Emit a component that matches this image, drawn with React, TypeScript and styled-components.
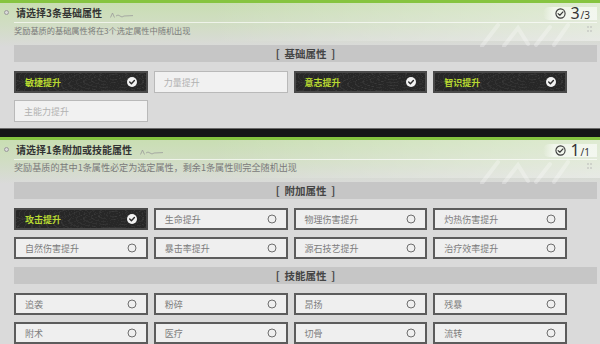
import styled, { createGlobalStyle } from 'styled-components'

const GlobalStyle = createGlobalStyle`
  html, body {
    margin: 0;
    padding: 0;
    background: #dadada;
  }
  body {
    width: 600px;
    height: 344px;
    overflow: hidden;
    font-family: "Noto Sans CJK SC", "Noto Sans", sans-serif;
  }
`

type ItemState = 'selected' | 'open' | 'disabled'

interface Attr {
  name: string
  state: ItemState
}

const Page = styled.div`
  display: flex;
  flex-direction: column;
  width: 600px;
  height: 344px;
  overflow: hidden;
`

const Panel = styled.section<{ $last?: boolean }>`
  position: relative;
  display: flex;
  flex-direction: column;
  border-top: 3px solid #86c440;
  padding: 0 3px ${(p) => (p.$last ? '0' : '6px')} 14px;
  background:
    linear-gradient(90deg, rgba(255, 255, 255, 0) 35%, rgba(255, 255, 255, 0.4) 100%) top left / 100% 38px no-repeat,
    linear-gradient(180deg, #c9deb3 0, #d1ddc4 22px, #dadada 44px, #dadada 100%);
`

const Separator = styled.div`
  height: 10px;
  background: #161616;
  border-top: 1px solid #6a6a6a;
`

const TitleRow = styled.div`
  position: relative;
  display: flex;
  align-items: center;
  height: 19px;
  border-bottom: 1px solid rgba(255, 255, 255, 0.65);
`

const Bullet = styled.span`
  width: 3px;
  height: 3px;
  margin-left: -10px;
  margin-right: 7px;
  border: 1px solid #9a9a9a;
  border-radius: 50%;
  background: #d8d8d8;
`

const Title = styled.h2`
  margin: 0;
  font-size: 10px;
  font-weight: 700;
  color: #333;
`

const Mark = styled.svg`
  margin-left: 8px;
  margin-top: 4px;
`

const Counter = styled.div`
  margin-left: auto;
  margin-top: 2px;
  display: flex;
  align-items: baseline;
  gap: 1px;
  height: 13px;
  padding: 0 7px 0 12px;
  background: linear-gradient(90deg, rgba(255, 255, 255, 0) 0, rgba(255, 255, 255, 0.6) 20%);
  border-radius: 6px 0 0 6px;
  color: #333;
  font-family: "Noto Sans", Roboto, sans-serif;
`

const CounterIcon = styled.svg`
  align-self: center;
  margin-right: 3px;
`

const Big = styled.span`
  font-size: 16px;
  line-height: 13px;
`

const Small = styled.span`
  font-size: 10px;
  line-height: 10px;
`

const Subtitle = styled.p<{ $size: number }>`
  margin: 0;
  height: 12px;
  line-height: 12px;
  margin-top: 1px;
  font-size: ${(p) => p.$size}px;
  color: #7a7a7a;
`

const Watermark = styled.svg`
  position: absolute;
  right: 6px;
  top: 14px;
  pointer-events: none;
`

const Category = styled.div<{ $gap: number }>`
  display: flex;
  align-items: center;
  justify-content: center;
  height: 17px;
  margin-top: ${(p) => p.$gap}px;
  background: #c6c6c6;
  font-size: 10.5px;
  font-weight: 700;
  color: #454545;
  white-space: pre;
`

const Grid = styled.div`
  display: grid;
  grid-template-columns: repeat(4, 1fr);
  column-gap: 6px;
  row-gap: 7px;
  margin: 9px 30px 0 0;
`

const Item = styled.div<{ $state: ItemState }>`
  box-sizing: border-box;
  display: flex;
  align-items: center;
  justify-content: space-between;
  height: 22px;
  padding: 0 9px 0 9px;
  font-size: 9px;
  ${(p) =>
    p.$state === 'selected'
      ? `
    border: 2px solid #4a4a4a;
    background-color: #272727;
    background-image:
      repeating-radial-gradient(ellipse at 75% 20%, transparent 0 4px, rgba(255,255,255,0.05) 4px 5px),
      repeating-radial-gradient(ellipse at 10% 120%, transparent 0 5px, rgba(255,255,255,0.04) 5px 6px);
    color: #b8d931;
    font-weight: 700;
  `
      : p.$state === 'open'
        ? `
    border: 2px solid #5c5c5c;
    background: #efefef;
    color: #7c7c7c;
  `
        : `
    border: 1.5px solid #b9b9b9;
    background: #f1f1f1;
    color: #b2b2b2;
  `}
`

const Check = () => (
  <svg width='10' height='10' viewBox='0 0 10 10'>
    <circle cx='5' cy='5' r='5' fill='#f2f2f2' />
    <path d='M2.7 5.1 L4.4 6.7 L7.4 3.6' fill='none' stroke='#2a2a2a' strokeWidth='1.4' strokeLinecap='round' strokeLinejoin='round' />
  </svg>
)

const Ring = () => (
  <svg width='10' height='10' viewBox='0 0 10 10'>
    <circle cx='5' cy='5' r='4' fill='none' stroke='#6e6e6e' strokeWidth='1' />
  </svg>
)

const Attribute = ({ name, state }: Attr) => (
  <Item $state={state}>
    <span>{name}</span>
    {state === 'selected' && <Check />}
    {state === 'open' && <Ring />}
  </Item>
)

interface HeaderProps {
  title: string
  sub: string
  subSize: number
  done: number
  total: number
}

const Header = ({ title, sub, subSize, done, total }: HeaderProps) => (
  <>
    <TitleRow>
      <Bullet />
      <Title>{title}</Title>
      <Mark width='24' height='6' viewBox='0 0 24 6'>
        <path d='M0.5 5.5 L2.5 1 L4.5 5.5 M6 4 Q8 2 10 4 T14 4 L23 3.6' fill='none' stroke='#9a9a9a' strokeWidth='0.8' />
      </Mark>
      <Counter>
        <CounterIcon width='11' height='11' viewBox='0 0 12 12'>
          <circle cx='6' cy='6' r='5' fill='none' stroke='#3a3a3a' strokeWidth='1.2' />
          <path d='M3.4 6.1 L5.3 7.9 L8.7 4.3' fill='none' stroke='#3a3a3a' strokeWidth='1.3' strokeLinecap='round' strokeLinejoin='round' />
        </CounterIcon>
        <Big>{done}</Big>
        <Small>/{total}</Small>
      </Counter>
    </TitleRow>
    <Subtitle $size={subSize}>{sub}</Subtitle>
    <Watermark width='120' height='30' viewBox='0 0 120 30'>
      <g fill='none' stroke='rgba(255,255,255,0.28)' strokeWidth='4' strokeLinecap='round'>
        <path d='M8 29 L24 8' />
        <path d='M30 29 L44 11 L54 27' />
        <path d='M62 28 L76 10' />
        <path d='M80 28 L94 8' />
      </g>
      <g fill='#b4b4b4'>
        <circle cx='114' cy='10' r='0.8' />
        <circle cx='117' cy='10' r='0.8' />
        <circle cx='114' cy='14' r='0.8' />
        <circle cx='117' cy='14' r='0.8' />
      </g>
    </Watermark>
  </>
)

const basic: Attr[] = [
  { name: '敏捷提升', state: 'selected' },
  { name: '力量提升', state: 'disabled' },
  { name: '意志提升', state: 'selected' },
  { name: '智识提升', state: 'selected' },
  { name: '主能力提升', state: 'disabled' },
]

const extra: Attr[] = [
  { name: '攻击提升', state: 'selected' },
  { name: '生命提升', state: 'open' },
  { name: '物理伤害提升', state: 'open' },
  { name: '灼热伤害提升', state: 'open' },
  { name: '自然伤害提升', state: 'open' },
  { name: '暴击率提升', state: 'open' },
  { name: '源石技艺提升', state: 'open' },
  { name: '治疗效率提升', state: 'open' },
]

const skills: Attr[] = [
  { name: '追袭', state: 'open' },
  { name: '粉碎', state: 'open' },
  { name: '昂扬', state: 'open' },
  { name: '残暴', state: 'open' },
  { name: '附术', state: 'open' },
  { name: '医疗', state: 'open' },
  { name: '切骨', state: 'open' },
  { name: '流转', state: 'open' },
]

export default function App() {
  return (
    <Page>
      <GlobalStyle />
      <Panel>
        <Header
          title='请选择3条基础属性'
          sub='奖励基质的基础属性将在3个选定属性中随机出现'
          subSize={8.2}
          done={3}
          total={3}
        />
        <Category $gap={9}>{'[  基础属性  ]'}</Category>
        <Grid>
          {basic.map((a) => (
            <Attribute key={a.name} {...a} />
          ))}
        </Grid>
      </Panel>
      <Separator />
      <Panel $last>
        <Header
          title='请选择1条附加或技能属性'
          sub='奖励基质的其中1条属性必定为选定属性，剩余1条属性则完全随机出现'
          subSize={9.1}
          done={1}
          total={1}
        />
        <Category $gap={9}>{'[  附加属性  ]'}</Category>
        <Grid>
          {extra.map((a) => (
            <Attribute key={a.name} {...a} />
          ))}
        </Grid>
        <Category $gap={8}>{'[  技能属性  ]'}</Category>
        <Grid>
          {skills.map((a) => (
            <Attribute key={a.name} {...a} />
          ))}
        </Grid>
      </Panel>
    </Page>
  )
}
